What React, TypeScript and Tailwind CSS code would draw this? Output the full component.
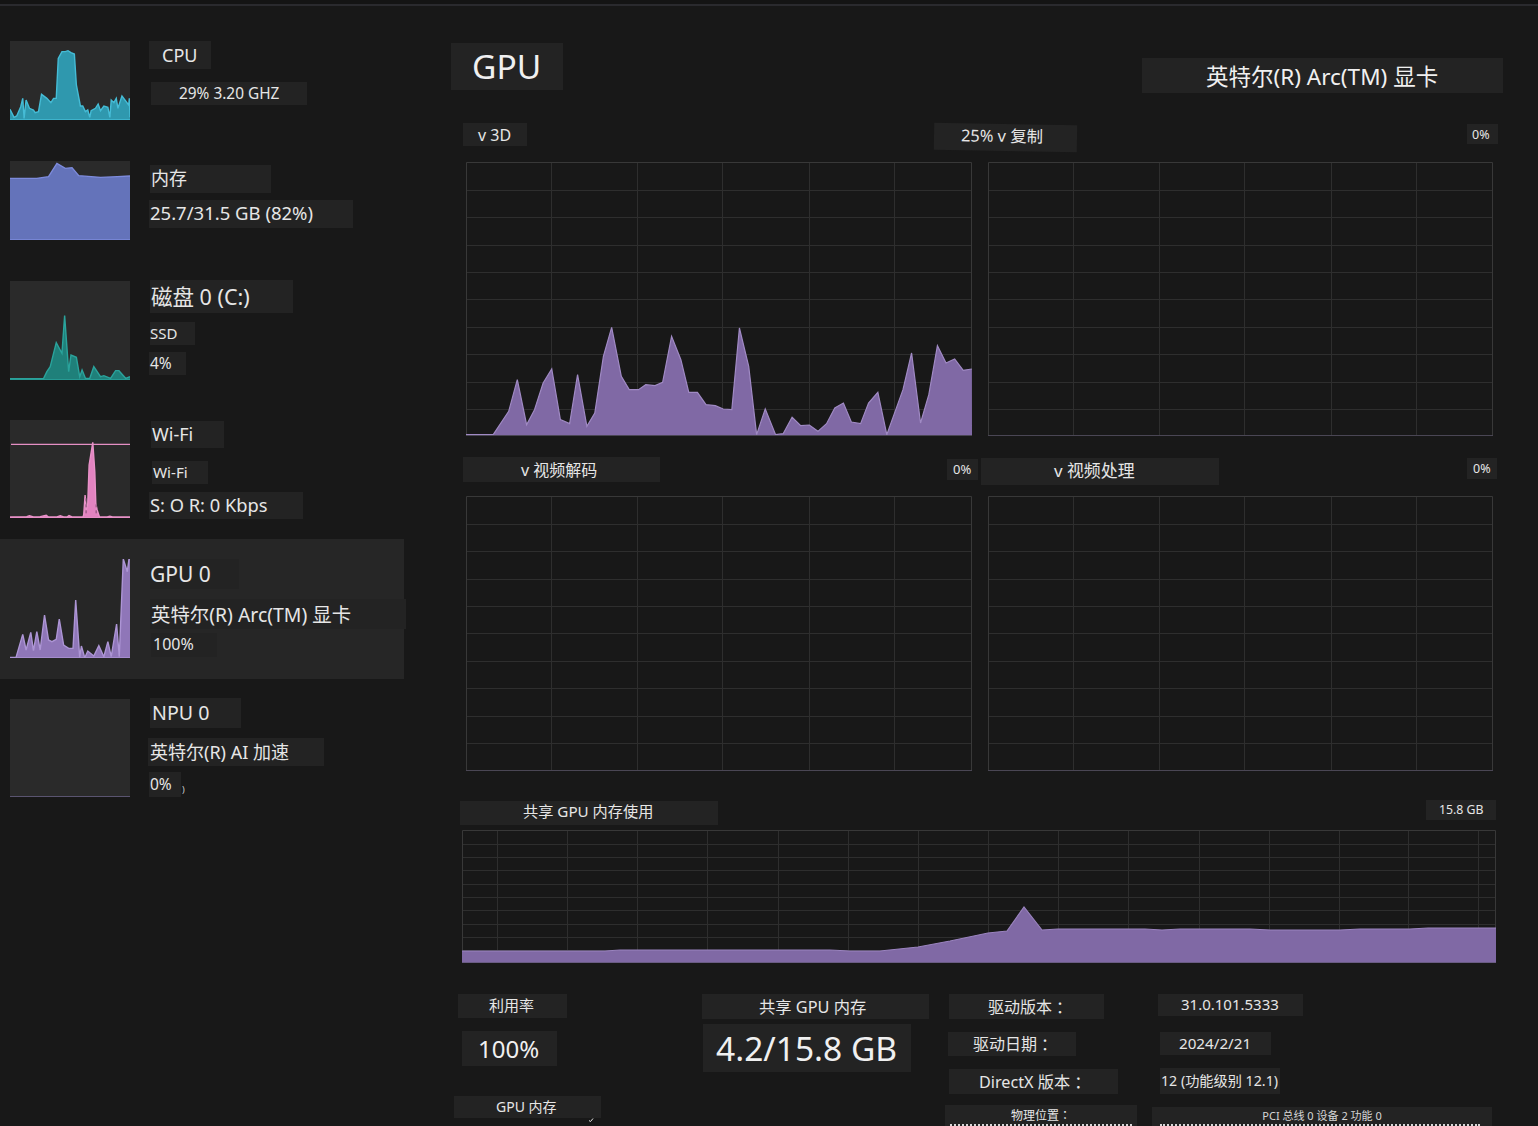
import React from "react";

type P = number[];
const path = (p: P) => {
  let s = "";
  for (let i = 0; i < p.length; i += 2) s += `${i ? "L" : "M"}${p[i]} ${p[i + 1]} `;
  return s;
};

function Chip({ className, children }: { className: string; children?: React.ReactNode }) {
  return (
    <div className={"flex shrink-0 items-center overflow-hidden whitespace-nowrap bg-[#232323] leading-none text-[#e6e6e6] " + className}>
      {children}
    </div>
  );
}

function Colon() {
  return <span className="[font-family:'Noto_Sans_CJK_TC',sans-serif]">：</span>;
}

function Thumb({ box, pts, fill, stroke, className, extra }: { box: number[]; pts?: P; fill?: string; stroke?: string; className: string; extra?: React.ReactNode }) {
  const [x, y, w, h] = box;
  const bottom = y + h;
  return (
    <svg className={"block w-[120px] shrink-0 bg-[#2a2a2a] " + className} viewBox={`${x} ${y} ${w} ${h}`} preserveAspectRatio="none">
      {pts && (
        <>
          <path d={`${path(pts)} L${x + w} ${bottom} L${x} ${bottom} Z`} fill={fill} />
          <path d={path(pts)} fill="none" stroke={stroke} strokeWidth="1.4" vectorEffect="non-scaling-stroke" />
          <path d={`M${x} ${bottom} L${x + w} ${bottom}`} stroke={stroke} strokeWidth="1.5" vectorEffect="non-scaling-stroke" />
        </>
      )}
      {extra}
    </svg>
  );
}

const cols = [85, 171, 256, 343, 428];
const rows = [28, 55, 83, 110, 137, 165, 192, 220, 247];

function Grid({ w, h, children }: { w: number; h: number; children?: React.ReactNode }) {
  return (
    <svg className="block shrink-0" width={w} height={h} viewBox={`0 0 ${w} ${h}`}>
      {rows.map((r) => (
        <path key={r} d={`M0 ${r + 0.5} H${w - 1}`} stroke="#2e2e2e" />
      ))}
      {cols.map((c) => (
        <path key={c} d={`M${c + 0.5} 0 V${h}`} stroke="#2e2e2e" />
      ))}
      <path d={`M0.5 ${h - 0.5} V0.5 H${w - 0.5} V${h - 0.5}`} fill="none" stroke="#383838" />
      {children}
      <path d={`M0 ${h - 0.5} H${w}`} stroke="#4a4654" />
    </svg>
  );
}

const cpu: P = [30,238,42,262,50,258,62,230,68,205,72,265,78,210,88,235,100,240,105,248,115,245,124,193,140,205,152,218,160,205,168,205,174,85,185,65,195,65,203,62,212,68,222,72,228,165,240,228,247,228,255,245,262,240,268,262,272,242,285,235,293,222,300,242,310,228,322,232,328,262,332,210,340,218,347,205,352,235,364,198,384,225,386,205,388,262];
const mem: P = [30,535,110,535,145,530,170,490,195,505,215,503,235,527,300,532,350,530,388,528];
const disk: P = [30,206,130,206,140,185,150,170,168,98,185,130,193,17,205,185,212,135,228,142,238,200,245,180,255,205,268,205,280,170,300,200,310,197,330,205,345,182,355,182,375,205,388,200];
const wifi: P = [30,306,80,305,88,302,100,306,120,305,138,301,145,306,170,306,180,302,190,306,200,306,206,302,215,306,248,306,250,298,254,240,258,285,262,265,266,150,277,82,283,170,286,265,290,285,297,306,320,306,328,304,336,306,388,306];
const gpuThumb: P = [30,322,48,322,68,253,78,300,92,247,100,302,110,245,120,300,133,195,145,270,155,275,168,268,177,207,190,285,205,295,218,295,226,150,238,322,243,288,253,323,262,303,280,318,295,287,310,320,322,275,332,320,348,222,356,320,368,27,380,65,385,27,388,27];
const d3: P = [46,1215,125,1215,170,1145,195,1050,222,1185,245,1140,270,1060,295,1018,320,1170,347,1182,370,1035,397,1190,420,1150,445,980,469,893,497,1040,520,1080,547,1080,568,1065,595,1068,617,1058,643,920,670,990,693,1088,718,1088,743,1125,770,1128,793,1138,818,1140,840,895,867,1010,890,1215,915,1138,945,1215,967,1212,993,1163,1018,1188,1043,1186,1068,1205,1093,1182,1117,1135,1142,1120,1165,1177,1192,1182,1215,1120,1242,1088,1268,1215,1315,1080,1340,970,1366,1180,1390,1095,1415,948,1440,1000,1465,988,1490,1022,1515,1018];
const shared: P = [462,951,605,951,620,950,830,950,850,951,880,951,918,947,950,941,988,933,1007,931,1024,907,1042,930,1058,929,1145,929,1162,930,1180,929,1250,929,1270,930,1340,930,1360,929,1410,929,1428,928,1496,928];

const d3Page = d3.map((v, i) => (i % 2 === 0 ? (v - 46) / 2.904 : (v - 397) / 3));
const sharedPage = shared.map((v, i) => (i % 2 === 0 ? v - 462 : v - 830));
const memCols = [35.5, 105.5, 175.5, 245.5, 316.5, 386.5, 456.5, 526.5, 596.5, 666.5, 737.5, 807.5, 877.5, 946.5, 1016.5];
const memRows = [14, 27, 40, 54, 67, 80, 94, 107, 120];

export default function App() {
  return (
    <div className="h-[1126px] w-[1538px] overflow-hidden bg-[#181818] [font-family:'Noto_Sans','Noto_Sans_CJK_SC',sans-serif]">
      <div className="h-[4px] bg-[#141414]" />
      <div className="h-[2px] bg-[#2a2a2e]" />
      <div className="flex">
        {/* sidebar */}
        <aside className="w-[404px] shrink-0 pt-[35px]">
          <div className="flex h-[120px] pl-[10px]">
            <Thumb box={[30, 33, 358, 237]} pts={cpu} fill="#2f98ae" stroke="#45bcd6" className="h-[79px]" />
            <div className="flex flex-col">
              <Chip className="ml-[19px] h-[28px] w-[62px] pl-[13px] text-[18px]">CPU</Chip>
              <Chip className="ml-[21px] mt-[13px] h-[23px] w-[156px] pl-[28px] text-[15.4px]">29% 3.20 GHZ</Chip>
            </div>
          </div>
          <div className="flex h-[120px] pl-[10px]">
            <Thumb box={[30, 483, 358, 237]} pts={mem} fill="#6473ba" stroke="#7d8bdc" className="h-[79px]" />
            <div className="flex flex-col">
              <Chip className="ml-[20px] mt-[4px] h-[28px] w-[121px] pb-[2px] pl-[1px] text-[18px]">内存</Chip>
              <Chip className="ml-[19px] mt-[7px] h-[28px] w-[204px] pb-[1px] pl-[1px] text-[18.5px]">25.7/31.5 GB (82%)</Chip>
            </div>
          </div>
          <div className="flex h-[139px] pl-[10px]">
            <Thumb box={[30, -87, 358, 297]} pts={disk} fill="#1f807a" stroke="#2aa39c" className="h-[99px]" />
            <div className="flex flex-col">
              <Chip className="ml-[20px] mt-[-1px] h-[33px] w-[143px] pl-[1px] text-[21.5px]">磁盘 0 (C:)</Chip>
              <Chip className="ml-[20px] mt-[9px] h-[23px] w-[45px] pb-[1px] text-[15px]">SSD</Chip>
              <Chip className="ml-[19px] mt-[7px] h-[23px] w-[37px] pl-[1px] text-[15.5px]">4%</Chip>
            </div>
          </div>
          <div className="flex h-[119px] pl-[10px]">
            <Thumb
              box={[30, 15, 358, 294]}
              pts={wifi}
              fill="#e283c0"
              stroke="#e892c8"
              className="h-[98px]"
              extra={
                <>
                  <path d="M33 88 H388" stroke="#e58fc4" strokeWidth="1.2" vectorEffect="non-scaling-stroke" />
                  <path d="M257 250 V302 M287 268 V302" stroke="#7a4a6c" strokeWidth="1" strokeDasharray="3 3" vectorEffect="non-scaling-stroke" />
                </>
              }
            />
            <div className="flex flex-col">
              <Chip className="ml-[21px] mt-[1px] h-[27px] w-[73px] pb-[1px] pl-[1px] text-[18px]">Wi-Fi</Chip>
              <Chip className="ml-[22px] mt-[13px] h-[23px] w-[56px] pl-[1px] text-[15.2px]">Wi-Fi</Chip>
              <Chip className="ml-[19px] mt-[8px] h-[27px] w-[154px] pl-[1px] text-[18.3px]">S: O R: 0 Kbps</Chip>
            </div>
          </div>
          <div className="flex h-[140px] bg-[#262626] pl-[10px] pt-[20px]">
            <Thumb box={[30, 27, 358, 297]} pts={gpuThumb} fill="#8f76b8" stroke="#ad95d5" className="h-[99px] !bg-[#262626]" />
            <div className="flex flex-col">
              <Chip className="ml-[20px] h-[30px] w-[89px] pl-[0px] text-[21px]">GPU 0</Chip>
              <Chip className="ml-[20px] mt-[10px] h-[30px] w-[256px] pl-[1px] pt-[1px] text-[19.4px]">英特尔(R) Arc(TM) 显卡</Chip>
              <Chip className="ml-[21px] mt-[4px] h-[24px] w-[66px] pb-[2px] pl-[2px] text-[16px]">100%</Chip>
            </div>
          </div>
          <div className="mt-[20px] flex pl-[10px]">
            <Thumb box={[30, 897, 358, 296]} className="h-[98px] border-b border-[#5a5470]" />
            <div className="flex flex-col">
              <Chip className="ml-[20px] mt-[-1px] h-[30px] w-[91px] pl-[2px] text-[19.6px]">NPU 0</Chip>
              <Chip className="ml-[18px] mt-[10px] h-[28px] w-[176px] pl-[2px] text-[18px]">英特尔(R) AI 加速</Chip>
              <div className="ml-[19px] mt-[6px] flex items-end">
                <Chip className="h-[25px] w-[32px] pl-[1px] text-[15.5px]">0%</Chip>
                <span className="ml-[1px] text-[9px] leading-[14px] text-[#cfcfcf]">)</span>
              </div>
            </div>
          </div>
        </aside>

        {/* main */}
        <main className="min-w-0 flex-1 pt-[37px]">
          <div className="flex h-[80px] items-start justify-between pr-[35px]">
            <Chip className="ml-[47px] h-[47px] w-[112px] pl-[21px] text-[33.5px] text-[#f0f0f0]">GPU</Chip>
            <Chip className="mt-[15px] h-[35px] w-[361px] pl-[64px] pt-[3px] text-[22.5px] text-[#f0f0f0]">英特尔(R) Arc(TM) 显卡</Chip>
          </div>

          <div className="flex h-[39px] items-start">
            <Chip className="ml-[59px] h-[23px] w-[64px] pl-[15px] text-[16px]">v 3D</Chip>
            <Chip className="ml-[407px] mt-[1px] h-[27px] w-[143px] rotate-[1deg] pb-[2px] pl-[27px] text-[16.4px]">25% v 复制</Chip>
            <Chip className="ml-[390px] mt-[1px] h-[20px] w-[31px] pl-[5px] pt-[2px] text-[12.5px]">0%</Chip>
          </div>
          <div className="ml-[62px] flex gap-[16px]">
            <Grid w={506} h={274}>
              <path d={`${path(d3Page)} L506 274 L0 274 Z`} fill="#8069a5" />
              <path d={path(d3Page)} fill="none" stroke="#a08ac4" strokeWidth="1.2" />
            </Grid>
            <Grid w={505} h={274} />
          </div>

          <div className="flex h-[60px] items-start">
            <Chip className="ml-[59px] mt-[21px] h-[25px] w-[197px] pl-[58px] text-[16px]">v 视频解码</Chip>
            <Chip className="ml-[287px] mt-[23px] h-[21px] w-[31px] pl-[6px] text-[13px]">0%</Chip>
            <Chip className="ml-[3px] mt-[22px] h-[27px] w-[238px] pl-[73px] text-[16.9px]">v 视频处理</Chip>
            <Chip className="ml-[248px] mt-[22px] h-[21px] w-[30px] pl-[6px] pt-[2px] text-[12.5px]">0%</Chip>
          </div>
          <div className="ml-[62px] flex gap-[16px]">
            <Grid w={506} h={275} />
            <Grid w={505} h={275} />
          </div>

          <div className="flex h-[59px] items-start">
            <Chip className="ml-[56px] mt-[30px] h-[24px] w-[258px] pb-[2px] pl-[63px] text-[15.2px]">共享 GPU 内存使用</Chip>
            <Chip className="ml-[708px] mt-[29px] h-[20px] w-[70px] pl-[13px] text-[12.3px]">15.8 GB</Chip>
          </div>
          <div className="ml-[58px]">
            <svg className="block" width={1034} height={133} viewBox="0 0 1034 133">
              {memRows.map((r) => (
                <path key={r} d={`M0 ${r + 0.5} H1033`} stroke="#2e2e2e" />
              ))}
              {memCols.map((c) => (
                <path key={c} d={`M${c} 0 V133`} stroke="#2e2e2e" />
              ))}
              <path d="M0.5 133 V0.5 H1033.5 V133" fill="none" stroke="#383838" />
              <path d={`${path(sharedPage)} L1034 133 L0 133 Z`} fill="#8069a5" />
              <path d={path(sharedPage)} fill="none" stroke="#9a83bf" strokeWidth="1.2" />
              <path d="M0 132.5 H1034" stroke="#6a5c84" />
            </svg>
          </div>

          <div className="flex pt-[31px]">
            <div className="ml-[50px] flex w-[248px] shrink-0 flex-col items-start">
              <Chip className="ml-[4px] h-[24px] w-[109px] pb-[1px] pl-[31px] text-[15px]">利用率</Chip>
              <Chip className="ml-[8px] mt-[13px] h-[35px] w-[95px] pl-[16px] text-[24px] text-[#f0f0f0]">100%</Chip>
              <Chip className="mt-[30px] h-[22px] w-[147px] pb-[1px] pl-[42px] text-[14px]">GPU 内存</Chip>
              <svg className="ml-[134px] block" width="6" height="4" viewBox="0 0 6 4">
                <path d="M1 2.5 L2.5 3.5 L5 0.5" fill="none" stroke="#e6e6e6" strokeWidth="1" />
              </svg>
            </div>
            <div className="flex w-[243px] shrink-0 flex-col items-start">
              <Chip className="h-[25px] w-[227px] pl-[57px] pt-[1px] text-[16.3px]">共享 GPU 内存</Chip>
              <Chip className="ml-[1px] mt-[5px] h-[48px] w-[208px] pl-[13px] pt-[1px] text-[33.5px] text-[#f0f0f0]">4.2/15.8 GB</Chip>
            </div>
            <div className="flex w-[207px] shrink-0 flex-col items-start">
              <Chip className="ml-[4px] h-[25px] w-[155px] pl-[39px] text-[16px]">驱动版本<Colon /></Chip>
              <Chip className="ml-[3px] mt-[13px] h-[24px] w-[128px] pl-[25px] text-[16px]">驱动日期<Colon /></Chip>
              <Chip className="ml-[4px] mt-[13px] h-[25px] w-[169px] pl-[30px] pt-[1px] text-[16.2px]">DirectX 版本<Colon /></Chip>
              <div className="mt-[11px] flex h-[21px] w-[192px] flex-col justify-between bg-[#232323] text-center leading-none text-[#e6e6e6]">
                <span className="pt-[4px] text-[12px]">物理位置<Colon /></span>
                <div className="mx-[5px] border-t-2 border-dotted border-[#d8d8d8]" />
              </div>
            </div>
            <div className="flex flex-col items-start">
              <Chip className="ml-[6px] h-[22px] w-[145px] pb-[1px] pl-[23px] text-[15px]">31.0.101.5333</Chip>
              <Chip className="ml-[8px] mt-[16px] h-[23px] w-[111px] pl-[19px] text-[15.2px]">2024/2/21</Chip>
              <Chip className="ml-[8px] mt-[13px] h-[26px] w-[120px] pl-[1px] text-[14.2px]">12 (功能级别 12.1)</Chip>
              <div className="mt-[13px] flex h-[19px] w-[340px] flex-col justify-between bg-[#232323] text-center leading-none text-[#d6d6d6]">
                <span className="pt-[3px] text-[11px]">PCI 总线 0 设备 2 功能 0</span>
                <div className="ml-[8px] mr-[12px] border-t-2 border-dotted border-[#d8d8d8]" />
              </div>
            </div>
          </div>
        </main>
      </div>
    </div>
  );
}
